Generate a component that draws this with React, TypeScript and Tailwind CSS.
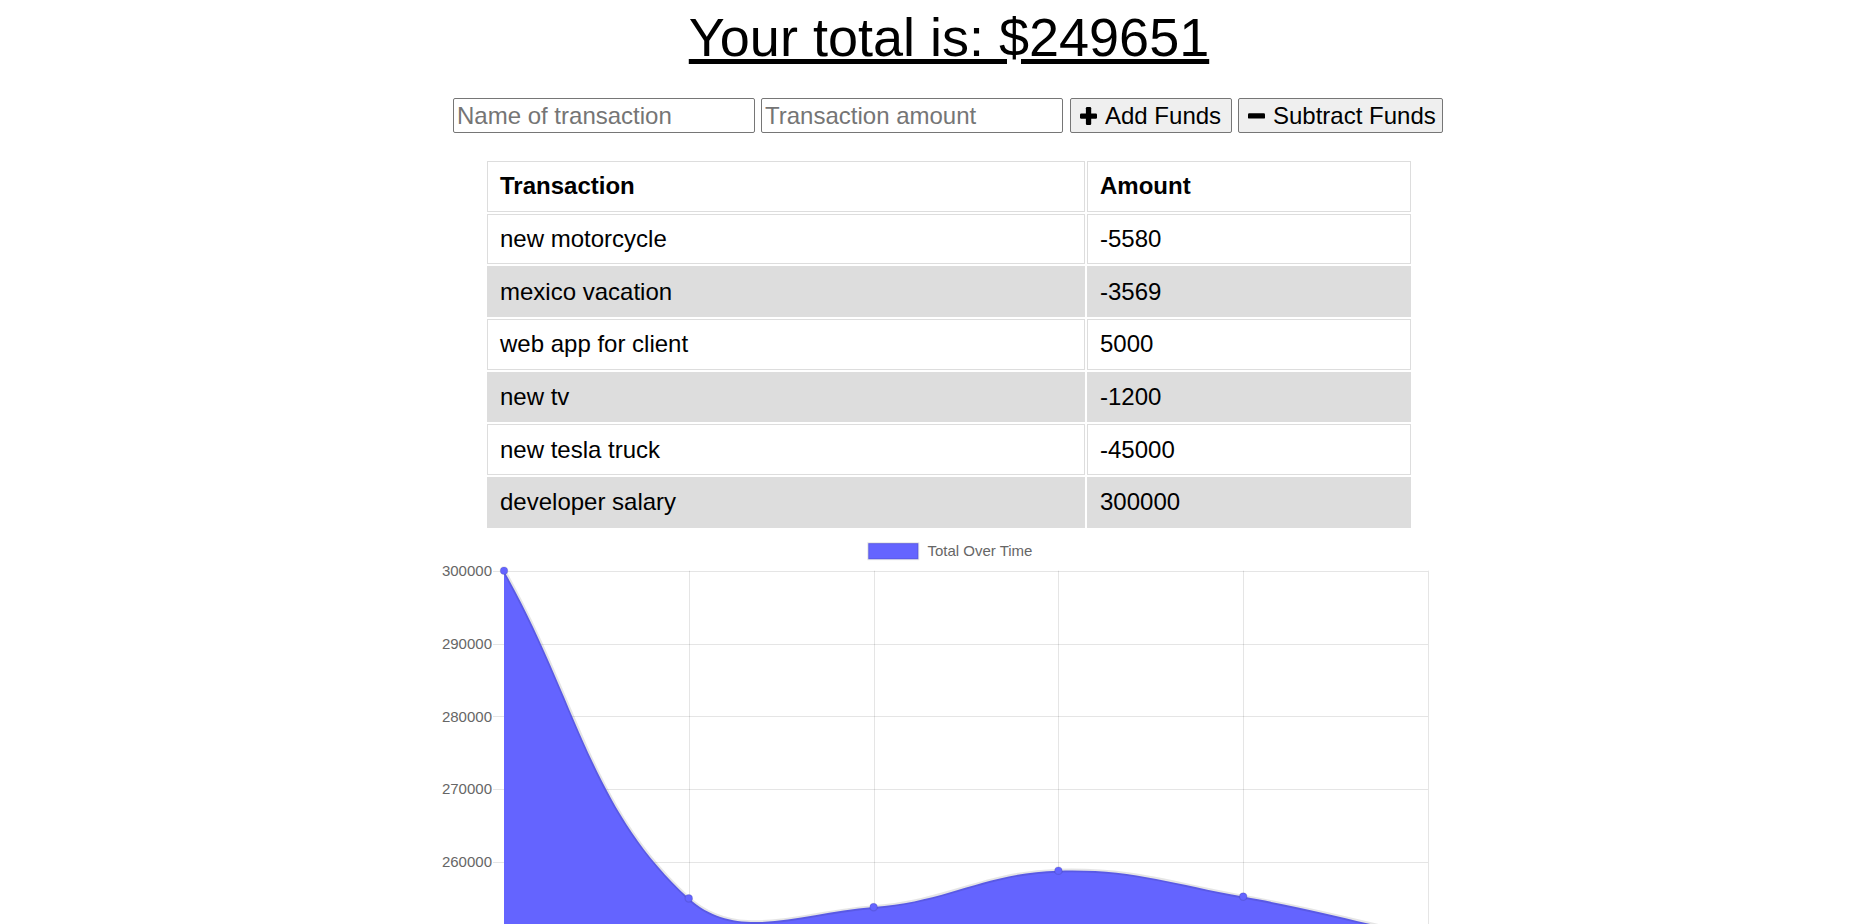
import React from "react";

// transactions, newest first
const transactions = [
  { name: "new motorcycle", amount: "-5580" },
  { name: "mexico vacation", amount: "-3569" },
  { name: "web app for client", amount: "5000" },
  { name: "new tv", amount: "-1200" },
  { name: "new tesla truck", amount: "-45000" },
  { name: "developer salary", amount: "300000" },
];

// running total, oldest first
const totals = [300000, 255000, 253800, 258800, 255231, 249651];

type Pt = { x: number; y: number };

// chart geometry (svg coords)
const area = { left: 67, right: 991, top: 40.7, bottom: 477.5 };
const yFor = (v: number) => area.top + ((300000 - v) / 10000) * 72.8;
const xFor = (i: number) => area.left + i * 184.8;

const clamp = (v: number, lo: number, hi: number) => Math.min(hi, Math.max(lo, v));

// same spline maths as chart.js 2 (lineTension 0.4)
function splinePath(pts: Pt[], t = 0.4) {
  const cps = pts.map((cur, i) => {
    const prev = pts[i - 1] ?? cur;
    const next = pts[i + 1] ?? cur;
    const d01 = Math.hypot(cur.x - prev.x, cur.y - prev.y);
    const d12 = Math.hypot(next.x - cur.x, next.y - cur.y);
    const sum = d01 + d12;
    const s01 = sum ? d01 / sum : 0;
    const s12 = sum ? d12 / sum : 0;
    const fa = t * s01;
    const fb = t * s12;
    const cap = (p: Pt) => ({
      x: clamp(p.x, area.left, area.right),
      y: clamp(p.y, area.top, area.bottom),
    });
    return {
      prev: cap({ x: cur.x - fa * (next.x - prev.x), y: cur.y - fa * (next.y - prev.y) }),
      next: cap({ x: cur.x + fb * (next.x - prev.x), y: cur.y + fb * (next.y - prev.y) }),
    };
  });
  let d = `M ${pts[0].x} ${pts[0].y}`;
  for (let i = 1; i < pts.length; i++) {
    const a = cps[i - 1].next;
    const b = cps[i].prev;
    d += ` C ${a.x} ${a.y} ${b.x} ${b.y} ${pts[i].x} ${pts[i].y}`;
  }
  return d;
}

function PlusIcon() {
  return (
    <svg width="17" height="18" viewBox="0 0 17 18" className="shrink-0">
      <rect x="5.9" y="0" width="5.3" height="18" rx="1.2" fill="#000" />
      <rect x="0" y="6.4" width="17" height="5.3" rx="1.2" fill="#000" />
    </svg>
  );
}

function MinusIcon() {
  return (
    <svg width="17" height="6" viewBox="0 0 17 6" className="shrink-0">
      <rect x="0" y="0.3" width="17" height="5.3" rx="1.2" fill="#000" />
    </svg>
  );
}

function TotalChart() {
  const pts = totals.map((v, i) => ({ x: xFor(i), y: yFor(v) }));
  const line = splinePath(pts);
  const fill = `${line} L ${pts[pts.length - 1].x} ${area.bottom} L ${pts[0].x} ${area.bottom} Z`;
  const ticks = [300000, 290000, 280000, 270000, 260000, 250000, 240000];

  return (
    <svg width={1024} height={512} className="block shrink-0">
      {/* legend */}
      <rect x="431.3" y="13.2" width="50" height="16" fill="#6464ff" stroke="rgba(0,0,0,0.1)" strokeWidth="2" />
      <text x="490.4" y="26.2" fontSize="15" fill="#666" fontFamily="Liberation Sans, Arial, sans-serif">
        Total Over Time
      </text>

      {/* horizontal grid + y labels (labels below the fold are left out) */}
      {ticks.map((v) => {
        const y = Math.round(yFor(v)) + 0.5;
        return (
          <g key={v}>
            <line x1="56" x2={area.right} y1={y} y2={y} stroke="rgba(0,0,0,0.1)" strokeWidth="1" />
            {v >= 260000 && (
              <text
                x="55"
                y={yFor(v) + 5.3}
                textAnchor="end"
                fontSize="15"
                fill="#666"
                fontFamily="Liberation Sans, Arial, sans-serif"
              >
                {v}
              </text>
            )}
          </g>
        );
      })}

      {/* vertical grid */}
      {totals.map((_, i) => {
        const x = Math.round(xFor(i)) + 0.5;
        return (
          <line key={i} x1={x} x2={x} y1={area.top} y2={area.bottom + 12} stroke="rgba(0,0,0,0.1)" strokeWidth="1" />
        );
      })}

      {/* area */}
      <path d={fill} fill="#6464ff" />
      <path d={line} fill="none" stroke="rgba(0,0,0,0.1)" strokeWidth="3.75" />

      {pts.map((p, i) => (
        <circle key={i} cx={p.x} cy={p.y} r="3.75" fill="#6464ff" stroke="rgba(0,0,0,0.1)" strokeWidth="1.25" />
      ))}
    </svg>
  );
}

export default function App() {
  return (
    <div className="h-screen overflow-hidden bg-white text-black font-['Liberation_Sans',Arial,sans-serif]">
      <div className="flex flex-col items-center pl-[34px]">
        {/* total */}
        <h1 className="mt-[7px] text-[54px] leading-[60px] font-normal underline">
          Your total is: $249651
        </h1>

        {/* form */}
        <div className="mt-[31px] flex gap-[6px] pr-[2px]">
          <input
            type="text"
            placeholder="Name of transaction"
            className="w-[302px] h-[35px] px-[3px] bg-white border border-[#767676] rounded-[2px] text-[24px] placeholder:text-[#757575]"
          />
          <input
            type="number"
            placeholder="Transaction amount"
            className="w-[302px] h-[35px] px-[3px] bg-white border border-[#767676] rounded-[2px] text-[24px] placeholder:text-[#757575]"
          />
          <button
            type="button"
            className="ml-px w-[162px] h-[35px] flex items-center gap-[8px] pl-[9px] bg-[#efefef] border border-[#767676] rounded-[2px] text-[24px]"
          >
            <PlusIcon />
            <span>Add Funds</span>
          </button>
          <button
            type="button"
            className="w-[205px] h-[35px] flex items-center gap-[8px] pl-[9px] bg-[#efefef] border border-[#767676] rounded-[2px] text-[24px]"
          >
            <MinusIcon />
            <span>Subtract Funds</span>
          </button>
        </div>

        {/* transactions */}
        <table className="mt-[26px] table-fixed w-[928px] border-separate border-spacing-[2px] text-[24px]">
          <thead>
            <tr>
              <th className="w-[598px] h-[50.7px] px-[12px] border border-[#dddddd] text-left font-bold">
                Transaction
              </th>
              <th className="w-[324px] h-[50.7px] px-[12px] border border-[#dddddd] text-left font-bold">
                Amount
              </th>
            </tr>
          </thead>
          <tbody>
            {transactions.map((t, i) => (
              <tr key={t.name} className={i % 2 === 1 ? "bg-[#dddddd]" : "bg-white"}>
                <td className="h-[50.7px] px-[12px] border border-[#dddddd]">{t.name}</td>
                <td className="h-[50.7px] px-[12px] border border-[#dddddd]">{t.amount}</td>
              </tr>
            ))}
          </tbody>
        </table>

        {/* chart */}
        <TotalChart />
      </div>
    </div>
  );
}
